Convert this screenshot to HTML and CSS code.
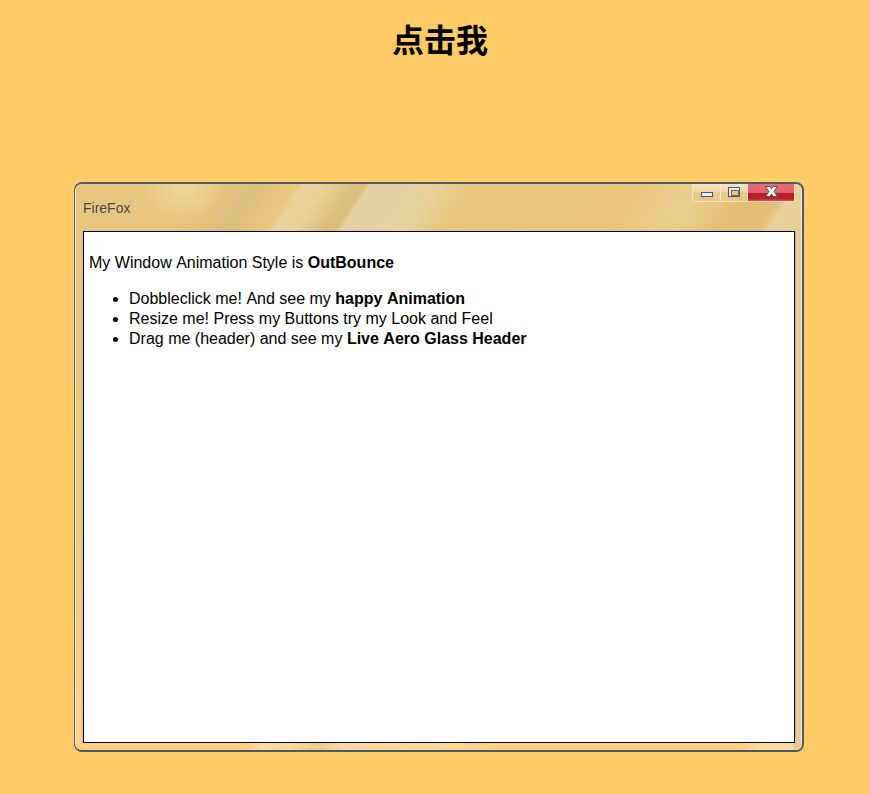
FILE: index.html
```html
<!DOCTYPE html>
<html lang="zh">
<head>
<meta charset="utf-8">
<title>点击我</title>
<link rel="stylesheet" href="styles.css">
</head>
<body>
<h1 class="heading">点击我</h1>
<div class="window">
  <div class="titlebar">
    <span class="title">FireFox</span>
    <div class="controls">
      <button class="ctl ctl-min" aria-label="Minimize"><span class="min-glyph"></span></button>
      <button class="ctl ctl-max" aria-label="Maximize"><span class="max-glyph"></span></button>
      <button class="ctl ctl-close" aria-label="Close">
        <svg class="close-glyph" width="13" height="11" viewBox="0 0 13 11"><path d="M.5.500h4.200L6.500 2.800 8.300.5h4.200L9 5.500l3.500 5H8.300L6.500 8.200 4.700 10.500H.5L4 5.500z" fill="#eef0f3" stroke="#46566c" stroke-width="1"/></svg>
      </button>
    </div>
  </div>
  <div class="content">
    <p class="intro">My Window Animation Style is <b>OutBounce</b></p>
    <ul class="tips">
      <li>Dobbleclick me! And see my <b>happy Animation</b></li>
      <li>Resize me! Press my Buttons try my Look and Feel</li>
      <li>Drag me (header) and see my <b>Live Aero Glass Header</b></li>
    </ul>
  </div>
  <div class="footer"></div>
</div>
</body>
</html>
```
FILE: styles.css
```css
* { box-sizing: border-box; }
html, body { margin: 0; padding: 0; }
body {
  height: 794px;
  overflow: hidden;
  background: #ffcb66;
  font-family: "Liberation Sans", Arial, sans-serif;
  font-size: 16px;
  font-kerning: none;
  color: #000;
}
.heading {
  margin: 0;
  padding: 22px 0 0 11px;
  height: 60px;
  line-height: 38px;
  font-size: 32px;
  font-weight: 700;
  text-align: center;
  font-family: "Liberation Sans", "Noto Sans CJK SC", sans-serif;
}
.window {
  width: 730px;
  height: 570px;
  margin: 122px 0 0 74px;
  display: flex;
  flex-direction: column;
  border-style: solid;
  border-color: #4c5a6e;
  border-width: 2px 2px 2px 1px;
  border-radius: 8px;
  box-shadow: inset 1px 0 0 #f6f1e4, inset -1px 0 0 #f6f1e4, inset 0 -1px 0 #b9c4d2;
  background:
    linear-gradient(90deg, rgba(226,204,152,0) 716px, #e3cb95 720px),
    linear-gradient(180deg, #e9c67c 0, #eac77a 30%, #f0c97a 70%, #fbd083 95%);
  overflow: hidden;
}
.titlebar {
  height: 47px;
  flex: none;
  margin: 0 1px;
  position: relative;
  background:
    radial-gradient(ellipse 40px 28px at 108px 6px, rgba(238,216,160,.95), rgba(238,216,160,0)),
    linear-gradient(123deg,
      #e8c57c 0, #e8c57c 110px, #dcbd7d 153px, #e8c57c 175px,
      #e9c782 186px, #ead39b 191px, #e9d199 209px, #dcbd7c 234px, #dcbd7c 243px,
      #e4cfa0 247px, #e4d0a2 275px, #e8d29d 301px, #e8c67e 329px,
      #e8c57b 470px, #ebcd8c 526px, #e3bf76 564px, #e3bf76 598px, #e8d19d 606px, #e6cd92 100%);
  border-radius: 6px 6px 0 0;
}
.title {
  position: absolute;
  left: 7px;
  top: 16px;
  font-size: 14px;
  line-height: 16px;
  color: #444;
  text-shadow: 0 0 2px rgba(255,255,255,.4);
}
.controls {
  position: absolute;
  top: 0;
  right: 6px;
  display: flex;
  height: 18px;
  border: 1px solid rgba(255,246,224,.6);
  border-top: 0;
  border-radius: 0 0 3px 3px;
}
.ctl {
  margin: 0;
  padding: 0;
  height: 17px;
  border: 0;
  display: flex;
  align-items: center;
  justify-content: center;
}
.ctl-min, .ctl-max {
  width: 28px;
  border-right: 1px solid #f6ead0;
  background: linear-gradient(180deg, #f5e6c0 0, #eed8a6 45%, #e6c988 52%, #e7c885 100%);
}
.ctl-max { width: 27px; }
.ctl-close {
  width: 46px;
  background: linear-gradient(180deg, #e96b74 0, #e5626c 50%, #b91c24 54%, #b91c24 85%, #d8565e 100%);
}
.min-glyph {
  display: block;
  width: 12px;
  height: 5px;
  margin-top: 4px;
  background: #e8ebf0;
  border: 1px solid #46566c;
}
.max-glyph {
  display: block;
  width: 12px;
  height: 10px;
  margin-top: -1px;
  background: #e6e8ec;
  border: 1px solid #46566c;
  position: relative;
}
.max-glyph::after {
  content: "";
  position: absolute;
  left: 2px;
  top: 2px;
  width: 6px;
  height: 4px;
  background: #e8c57c;
  border: 1px solid #6a6a66;
}
.close-glyph { display: block; margin-top: -3px; }
.content {
  flex: 1;
  margin: 0 7px 0 8px;
  padding: 1px 5px;
  background: #fff;
  border: 1px solid #000;
  outline: 1px solid rgba(170,190,220,.7);
  line-height: 20px;
  overflow: hidden;
}
.intro { margin: 20px 0 16px; line-height: 20px; }
.tips { margin: 0; padding: 0 0 0 40px; }
.footer {
  height: 7px;
  flex: none;
  background:
    linear-gradient(90deg, rgba(226,204,152,0) 716px, #e3cb95 720px),
    linear-gradient(123deg,
      #fcd07f 0, #fcd07f 145px, #fedd9e 158px, #fcd896 182px, #f0cb83 203px,
      #efcc89 210px, #f7dba2 225px, #fbd998 300px, #fcd07f 360px, #fcd07f 560px, #fedda0 580px, #fedda0 605px, #fcd07f 640px);
}
```
